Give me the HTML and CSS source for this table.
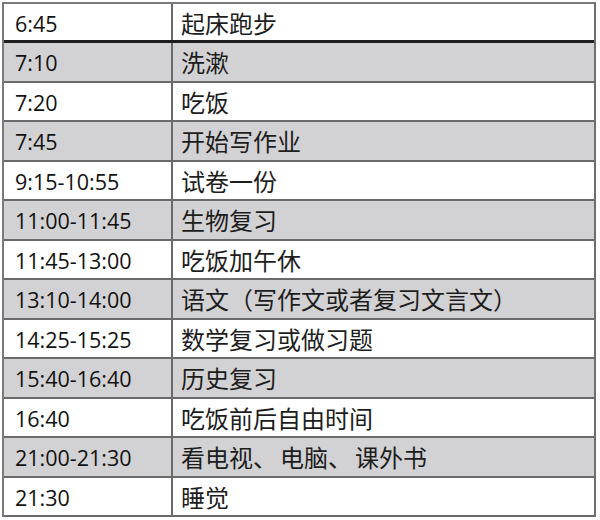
FILE: index.html
```html
<!DOCTYPE html>
<html lang="zh">
<head>
<meta charset="utf-8">
<link rel="stylesheet" href="styles.css">
</head>
<body>
<div class="schedule">
  <div class="row head"><div class="time">6:45</div><div class="task">起床跑步</div></div>
  <div class="row shade"><div class="time">7:10</div><div class="task">洗漱</div></div>
  <div class="row"><div class="time">7:20</div><div class="task">吃饭</div></div>
  <div class="row shade"><div class="time">7:45</div><div class="task">开始写作业</div></div>
  <div class="row"><div class="time">9:15-10:55</div><div class="task">试卷一份</div></div>
  <div class="row shade"><div class="time">11:00-11:45</div><div class="task">生物复习</div></div>
  <div class="row"><div class="time">11:45-13:00</div><div class="task">吃饭加午休</div></div>
  <div class="row shade"><div class="time">13:10-14:00</div><div class="task">语文（写作文或者复习文言文）</div></div>
  <div class="row"><div class="time">14:25-15:25</div><div class="task">数学复习或做习题</div></div>
  <div class="row shade"><div class="time">15:40-16:40</div><div class="task">历史复习</div></div>
  <div class="row"><div class="time">16:40</div><div class="task">吃饭前后自由时间</div></div>
  <div class="row shade"><div class="time">21:00-21:30</div><div class="task">看电视<span class="pause">、</span>电脑<span class="pause">、</span>课外书</div></div>
  <div class="row"><div class="time">21:30</div><div class="task">睡觉</div></div>
</div>
</body>
</html>
```
FILE: styles.css
```css
html, body {
  margin: 0;
  padding: 0;
  background: #ffffff;
}
body {
  width: 600px;
  height: 520px;
  overflow: hidden;
}
.schedule {
  margin: 2px 0 0 2px;
  width: 594px;
  box-sizing: border-box;
  border-top: 2px solid #7a7a7a;
  border-left: 2px solid #7a7a7a;
  border-right: 2px solid #6e6e6e;
  display: flex;
  flex-direction: column;
}
.row {
  display: grid;
  grid-template-columns: 169px 1fr;
  height: 39.5px;
  box-sizing: border-box;
  border-bottom: 2px solid #6a6a6a;
  background: #ffffff;
}
.row.head {
  height: 39px;
  border-bottom: 3px solid #1e1e1e;
}
.row.shade {
  background: #d2d1d3;
}
.time {
  border-right: 2px solid #6a6a6a;
  padding-left: 11px;
  display: flex;
  align-items: center;
  padding-top: 2px;
  font-family: "Open Sans", "Liberation Sans", sans-serif;
  font-size: 21.5px;
  color: #111111;
}
.task {
  padding-left: 8px;
  display: flex;
  align-items: center;
  font-family: "Noto Sans CJK SC", "Noto Sans", sans-serif;
  font-size: 24px;
  color: #1d1d1d;
  white-space: nowrap;
  text-spacing-trim: space-all;
}
.pause {
  margin-right: 3px;
}
```
